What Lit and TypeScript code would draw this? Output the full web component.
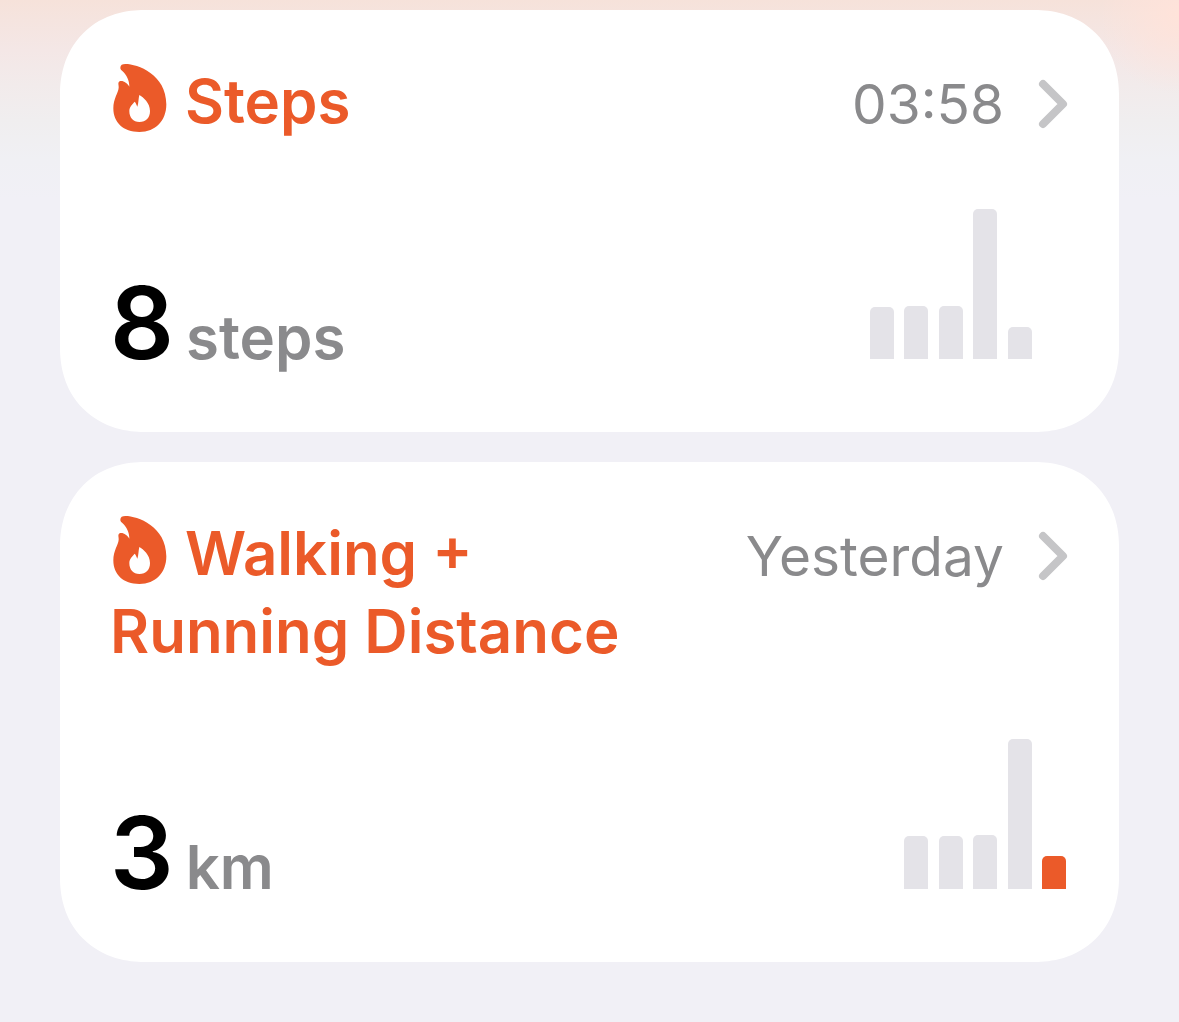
import { LitElement, html, css, svg } from "lit";
import { customElement, property } from "lit/decorators.js";
import { classMap } from "lit/directives/class-map.js";
import { styleMap } from "lit/directives/style-map.js";

interface Bar {
  height: number;
  active?: boolean;
}

interface Metric {
  title: string;
  time: string;
  value: string;
  unit: string;
  bars: (Bar | null)[];
}

const METRICS: Metric[] = [
  {
    title: "Steps",
    time: "03:58",
    value: "8",
    unit: "steps",
    bars: [{ height: 52 }, { height: 53 }, { height: 53 }, { height: 150 }, { height: 32 }, null],
  },
  {
    title: "Walking + Running Distance",
    time: "Yesterday",
    value: "3",
    unit: "km",
    bars: [null, { height: 53 }, { height: 53 }, { height: 54 }, { height: 150 }, { height: 33, active: true }],
  },
];

const flame = svg`<path fill-rule="evenodd" d="M60 38C60 30 66 27 75 27C112 27 198 58 198 148C198 197 166 231 117 231C69 231 39 203 39 160C39 130 54 114 55 98C56 91 51 83 58 79C67 75 81 84 87 95C87 76 79 60 66 48C62 44 60 42 60 38ZM117 120C129 127 149 143 149 168C149 188 137 201 117 201C99 201 87 188 87 168C87 155 98 146 103 140C107 144 108 149 111 155C115 146 114 131 117 120Z"/>`;

@customElement("metric-card")
export class MetricCard extends LitElement {
  @property({ attribute: false }) metric!: Metric;

  static styles = css`
    :host {
      display: block;
    }
    .card {
      display: block;
      padding: 52px 50px 57px;
      border-radius: 80px;
      background: #fff;
      color: #000;
      text-decoration: none;
    }
    @supports (corner-shape: superellipse(1.1)) {
      .card {
        border-radius: 84px;
        corner-shape: superellipse(1.1);
      }
    }
    .head {
      display: flex;
      align-items: flex-start;
      gap: 60px;
    }
    .title {
      flex: 1;
      margin: 0 0 69px;
      color: #eb5a29;
      font-size: 60px;
      font-weight: 600;
      line-height: 78px;
    }
    .flame {
      width: 54px;
      height: 68px;
      margin: 0 18px 0 3px;
      vertical-align: -9px;
      fill: currentColor;
    }
    .when {
      display: flex;
      align-items: center;
      gap: 34px;
      color: #8a8a8c;
      font-size: 55px;
      line-height: 84px;
      white-space: nowrap;
    }
    .chevron {
      width: 30px;
      height: 50px;
      margin-right: 1px;
      fill: none;
      stroke: #c5c5c7;
      stroke-width: 8;
      stroke-linecap: round;
      stroke-linejoin: round;
    }
    .body {
      display: flex;
      justify-content: space-between;
      align-items: baseline;
    }
    .reading {
      display: flex;
      align-items: baseline;
      gap: 12px;
      margin: 0;
      font-weight: 600;
      line-height: 76px;
    }
    .value {
      font-size: 100px;
    }
    .unit {
      color: #8a8a8c;
      font-size: 60px;
    }
    .chart {
      display: flex;
      justify-content: space-between;
      align-items: flex-end;
      width: 196px;
      height: 150px;
      margin-right: 3px;
    }
    .bar {
      width: 24px;
      border-radius: 5px 5px 0 0;
      background: #e4e3e8;
    }
    .active {
      background: #eb5a29;
    }
    .empty {
      background: none;
    }
  `;

  render() {
    const m = this.metric;
    return html`
      <a class="card" href="#">
        <div class="head">
          <h2 class="title"><svg class="flame" viewBox="38 27 162 204" aria-hidden="true">${flame}</svg>${m.title}</h2>
          <div class="when">
            <span>${m.time}</span>
            <svg class="chevron" viewBox="0 0 30 50" aria-hidden="true"><path d="M5 5L25 25L5 45" /></svg>
          </div>
        </div>
        <div class="body">
          <p class="reading"><span class="value">${m.value}</span><span class="unit">${m.unit}</span></p>
          <div class="chart" aria-hidden="true">
            ${m.bars.map(
              (b) => html`<div
                class=${classMap({ bar: true, active: !!b?.active, empty: !b })}
                style=${styleMap({ height: `${b?.height ?? 0}px` })}
              ></div>`
            )}
          </div>
        </div>
      </a>
    `;
  }
}

@customElement("app-root")
export class AppRoot extends LitElement {
  static styles = css`
    :host {
      display: block;
      min-height: 100vh;
      box-sizing: border-box;
      padding: 10px 60px 60px;
      font-family: Inter, "Liberation Sans", sans-serif;
      background:
        radial-gradient(circle 80px at 100% 14px, #ffe3da 0%, #ffe3da00 100%) no-repeat,
        linear-gradient(#f6e2da 0, #f5e4df 20px, #f4e7e6 50px, #f2ebeb 85px, #f0eeef 120px, #f0f0f4 160px, #f1f0f6 200px) #f1f0f6;
    }
    .list {
      display: grid;
      gap: 30px;
    }
  `;

  render() {
    return html`
      <main class="list">
        ${METRICS.map((m) => html`<metric-card .metric=${m}></metric-card>`)}
      </main>
    `;
  }
}
